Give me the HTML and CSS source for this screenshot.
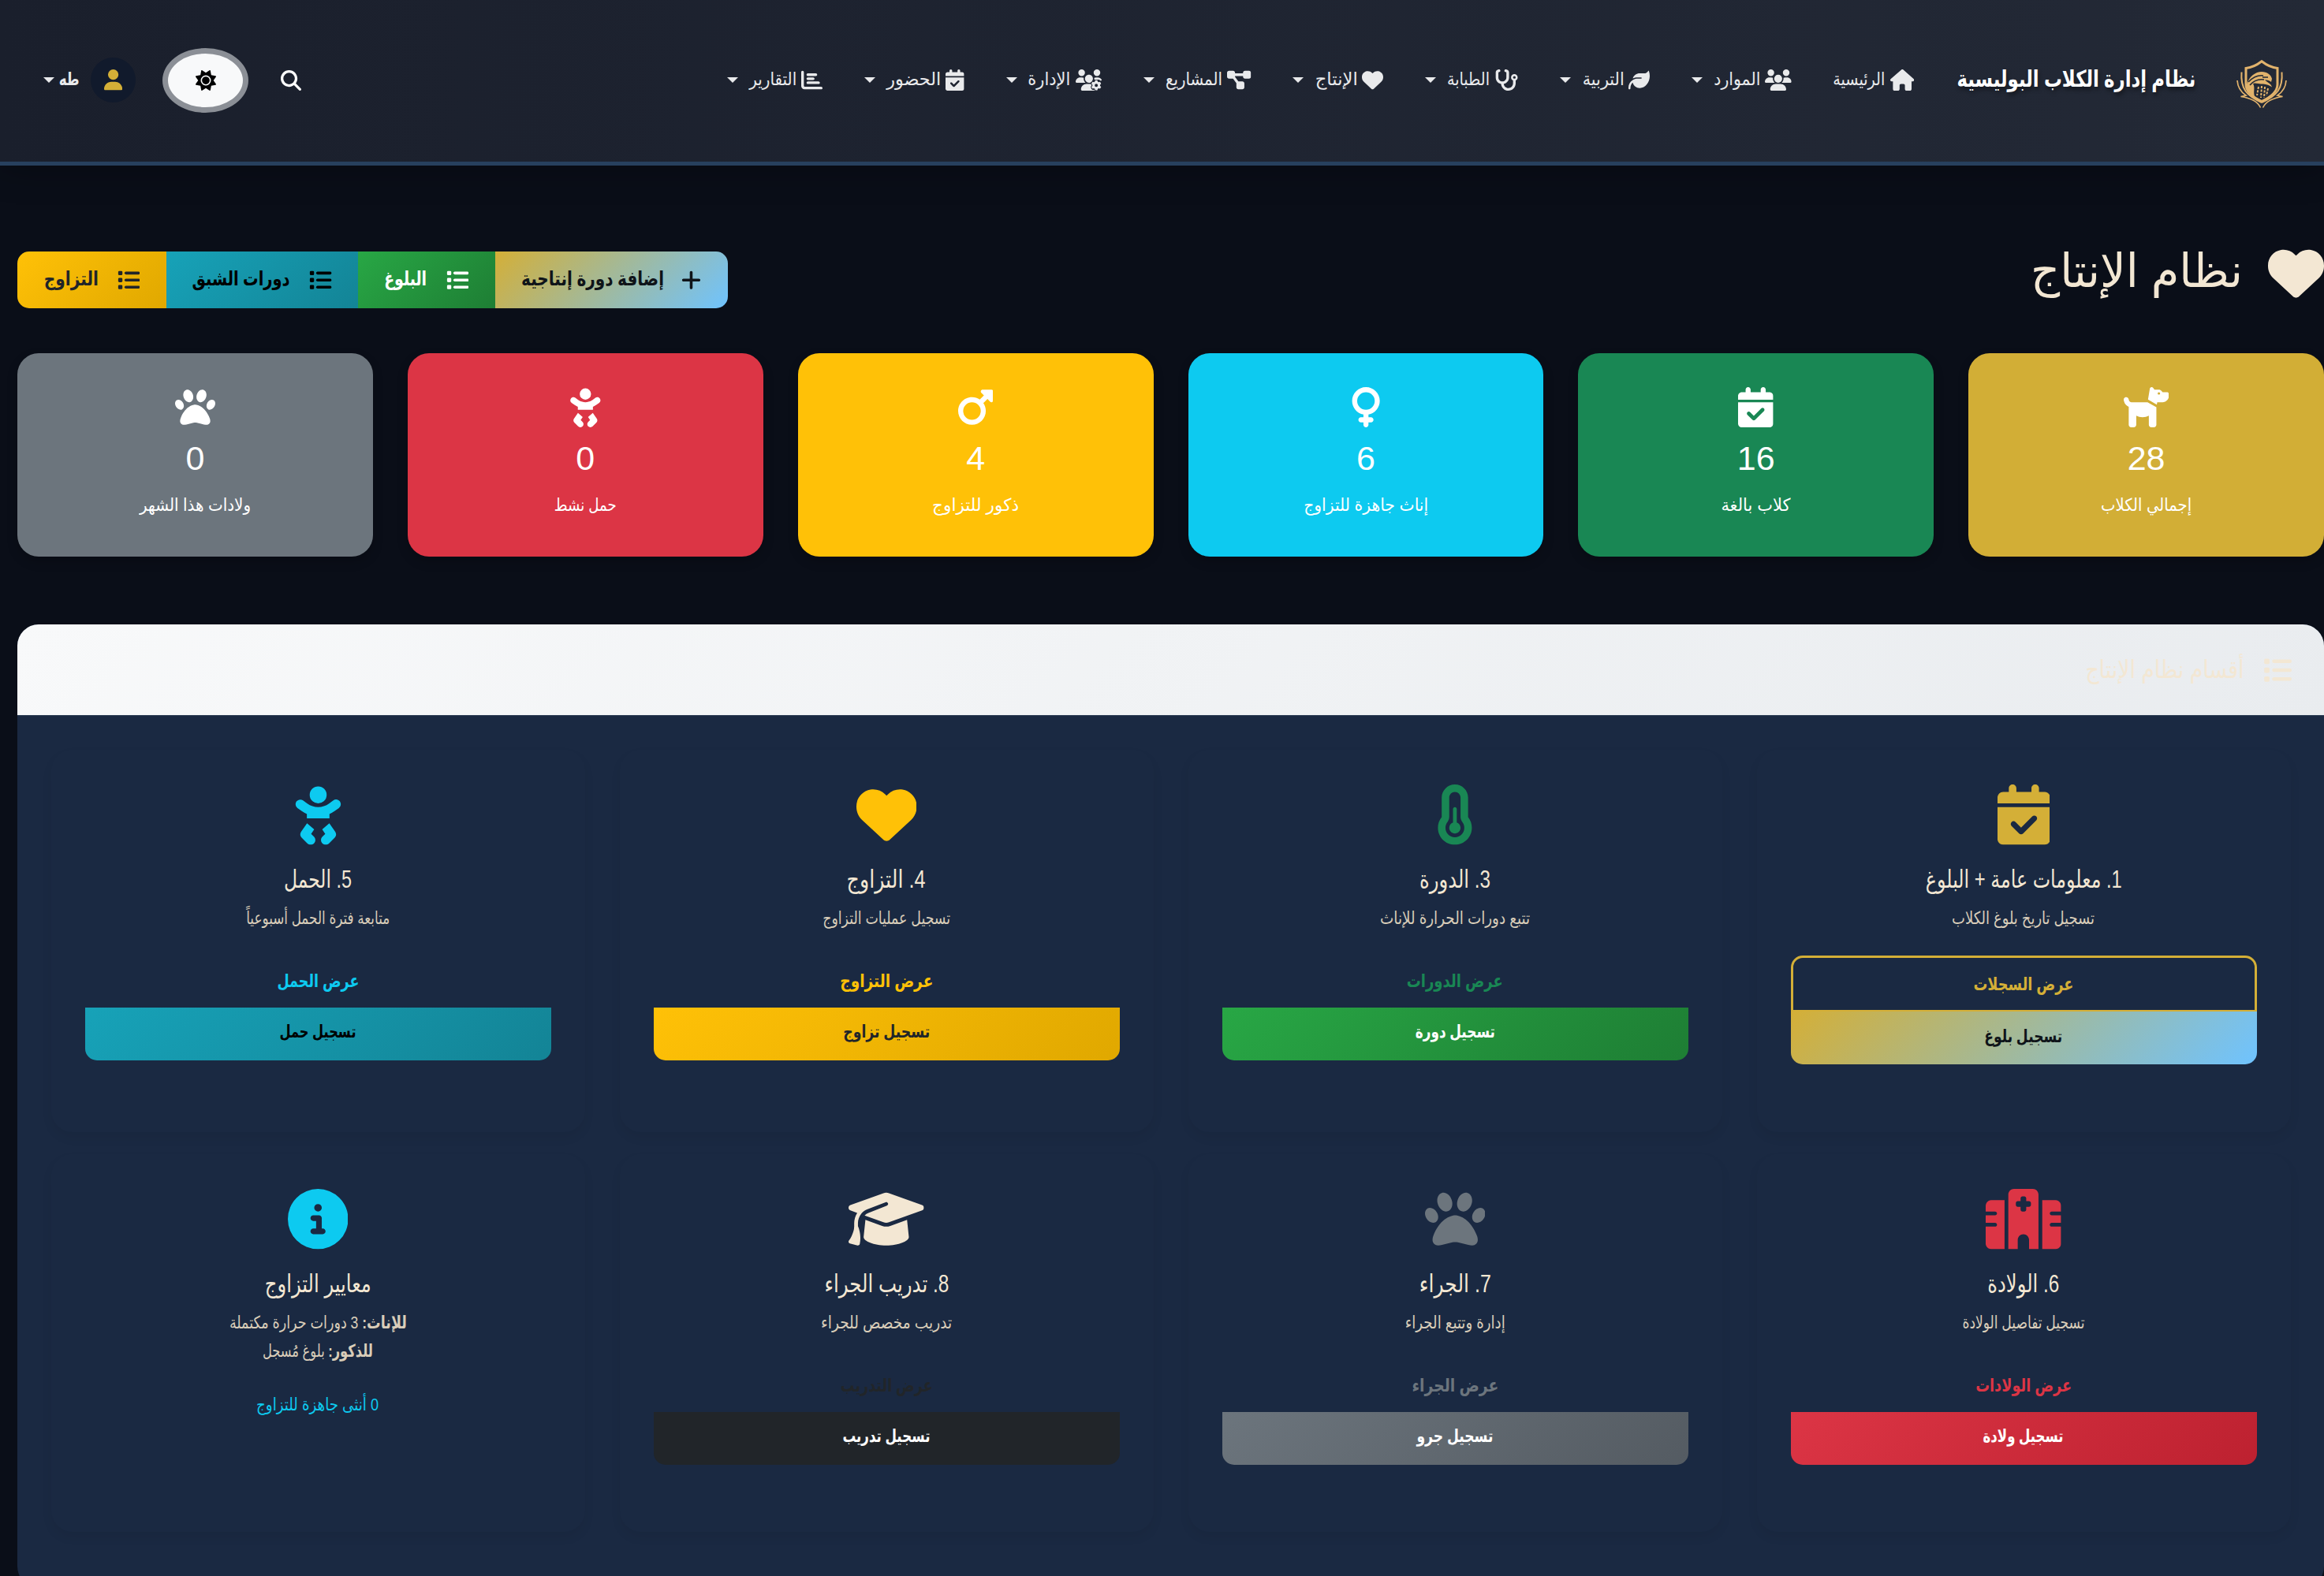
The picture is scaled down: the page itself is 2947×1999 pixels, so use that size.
FILE: index.html
```html
<!DOCTYPE html>
<html lang="ar" dir="rtl">
<head>
<meta charset="utf-8">
<title>نظام إدارة الكلاب البوليسية</title>
<link rel="stylesheet" href="styles.css">
</head>
<body>
<svg class="sprite" aria-hidden="true">
<symbol id="heart" viewBox="0 0 512 512"><path d="M47.6 300.4L228.3 469.1c7.5 7 17.4 10.9 27.7 10.9s20.2-3.9 27.7-10.9L464.4 300.4c30.4-28.3 47.6-68 47.6-109.5v-5.8c0-69.9-50.5-129.5-119.4-141C347 36.5 300.6 51.4 268 84L256 96 244 84c-32.6-32.6-79-47.5-124.6-39.9C50.5 55.6 0 115.2 0 185.1v5.8c0 41.5 17.2 81.2 47.6 109.5z"/></symbol>
<symbol id="house" viewBox="0 0 576 512"><path d="M575.8 255.5c0 18-15 32.1-32 32.1h-32l.7 160.2c0 2.7-.2 5.4-.5 8.1V472c0 22.1-17.9 40-40 40H456c-1.1 0-2.2 0-3.3-.1c-1.4 .1-2.8 .1-4.2 .1H416 392c-22.1 0-40-17.9-40-40V448 384c0-17.7-14.3-32-32-32H256c-17.7 0-32 14.3-32 32v64 24c0 22.1-17.9 40-40 40H160 128.1c-1.5 0-3-.1-4.5-.2c-1.2 .1-2.4 .2-3.6 .2H104c-22.1 0-40-17.9-40-40V360c0-.9 0-1.9 .1-2.8V287.6H32c-18 0-32-14-32-32.1c0-9 3-17 10-24L266.4 8c7-7 15-8 22-8s15 2 21 7L564.8 231.5c8 7 12 15 11 24z"/></symbol>
<symbol id="users" viewBox="0 0 640 512"><path d="M144 0a80 80 0 1 1 0 160A80 80 0 1 1 144 0zM512 0a80 80 0 1 1 0 160A80 80 0 1 1 512 0zM0 298.7C0 239.8 47.8 192 106.7 192h42.7c15.9 0 31 3.5 44.6 9.7c-1.3 7.2-1.9 14.7-1.9 22.3c0 38.2 16.8 72.5 43.3 96c-.2 0-.4 0-.7 0H21.3C9.6 320 0 310.4 0 298.7zM405.3 320c-.2 0-.4 0-.7 0c26.6-23.5 43.3-57.8 43.3-96c0-7.6-.7-15-1.9-22.3c13.6-6.3 28.7-9.7 44.6-9.7h42.7C592.2 192 640 239.8 640 298.7c0 11.8-9.6 21.3-21.3 21.3H405.3zM224 224a96 96 0 1 1 192 0 96 96 0 1 1 -192 0zM128 485.3C128 411.7 187.7 352 261.3 352H378.7C452.3 352 512 411.7 512 485.3c0 14.7-11.9 26.7-26.7 26.7H154.7c-14.7 0-26.7-11.9-26.7-26.7z"/></symbol>
<symbol id="leaf" viewBox="0 0 512 512"><path d="M272 96c-78.6 0-145.1 51.5-167.7 122.5c33.6-17 71.5-26.5 111.7-26.5h88c8.8 0 16 7.2 16 16s-7.2 16-16 16H288 216s0 0 0 0c-16.6 0-32.7 1.9-48.3 5.4c-25.9 5.9-49.9 16.4-71.4 30.7c0 0 0 0 0 0C38.3 298.8 0 364.9 0 440v16c0 13.3 10.7 24 24 24s24-10.7 24-24V440c0-48.7 20.7-92.5 53.8-123.2C121.6 392.3 190.3 448 272 448l1 0c132.1-.7 239-130.9 239-291.4c0-42.6-7.5-83.1-21.1-119.6c-2.6-6.9-12.7-6.6-16.2-.1C455.9 72.1 418.7 96 376 96L272 96z"/></symbol>
<symbol id="stethoscope" viewBox="0 0 576 512"><path d="M142.4 21.9c5.6 16.8-3.5 34.9-20.2 40.5L96 71.1V192c0 53 43 96 96 96s96-43 96-96V71.1l-26.1-8.7c-16.8-5.6-25.8-23.7-20.2-40.5s23.7-25.8 40.5-20.2l26.1 8.7C334.4 19.1 352 43.5 352 71.1V192c0 77.2-54.6 141.6-127.3 156.7C231 404.6 278.4 448 336 448c61.9 0 112-50.1 112-112V265.3c-28.3-12.3-48-40.5-48-73.3c0-44.2 35.8-80 80-80s80 35.8 80 80c0 32.8-19.7 61-48 73.3V336c0 97.2-78.8 176-176 176c-92.9 0-168.9-71.9-175.5-163.1C87.2 334.2 32 269.6 32 192V71.1c0-27.5 17.6-52 43.8-60.7l26.1-8.7c16.8-5.6 34.9 3.5 40.5 20.2zM480 224a32 32 0 1 0 0-64 32 32 0 1 0 0 64z"/></symbol>
<symbol id="diagram" viewBox="0 0 576 512"><path d="M0 80C0 53.5 21.5 32 48 32h96c26.5 0 48 21.5 48 48V96H384V80c0-26.5 21.5-48 48-48h96c26.5 0 48 21.5 48 48v96c0 26.5-21.5 48-48 48H432c-26.5 0-48-21.5-48-48V160H192v16c0 1.7-.1 3.4-.3 5L272 288h96c26.5 0 48 21.5 48 48v96c0 26.5-21.5 48-48 48H272c-26.5 0-48-21.5-48-48V336c0-1.7 .1-3.4 .3-5L144 224H48c-26.5 0-48-21.5-48-48V80z"/></symbol>
<symbol id="users-gear" viewBox="0 0 640 512"><path d="M144 160A80 80 0 1 0 144 0a80 80 0 1 0 0 160zm368 0A80 80 0 1 0 512 0a80 80 0 1 0 0 160zM0 298.7C0 310.4 9.6 320 21.3 320H234.7c.2 0 .4 0 .7 0c-26.6-23.5-43.3-57.8-43.3-96c0-7.6 .7-15 1.9-22.3c-13.6-6.3-28.7-9.7-44.6-9.7H106.7C47.8 192 0 239.8 0 298.7zM320 320c24 0 45.9-8.8 62.7-23.3C400 275 416 250 416 224c0-53-43-96-96-96s-96 43-96 96s43 96 96 96zm65.4 60.2c-10.3-5.9-18.1-16.2-20.8-28.2H261.3C187.7 352 128 411.7 128 485.3c0 14.7 11.9 26.7 26.7 26.7H455.2c-2.1-5.2-3.2-10.9-3.2-16.4v-3l-4-2.3c-18 11-42 10-57.300-8.200-14-18-30-42-24-72l18.700-29.900zM446 202c13.600-6.300 28.700-10 44.600-10h42.700c45 0 84 28 99 67l-26 16-20-11c-10-12-22-16-36-18h-100c-3-14-3-30-4.300-44z"/><path fill-rule="evenodd" d="M470 262h52l8 34 24 14 33-10 26 45-25 24v28l25 24-26 45-33-10-24 14-8 34h-52l-8-34-24-14-33 10-26-45 25-24v-28l-25-24 26-45 33 10 24-14zM496 345a38 38 0 1 0 0 76 38 38 0 1 0 0-76z"/></symbol>
<symbol id="calendar" viewBox="0 0 448 512"><path d="M128 0c17.7 0 32 14.3 32 32V64H288V32c0-17.7 14.3-32 32-32s32 14.3 32 32V64h48c26.5 0 48 21.5 48 48v48H0V112C0 85.5 21.5 64 48 64H96V32c0-17.7 14.3-32 32-32zM0 192H448V464c0 26.5-21.5 48-48 48H48c-26.5 0-48-21.5-48-48V192zM329 305c9.4-9.4 9.4-24.6 0-33.9s-24.6-9.4-33.9 0l-95 95-47-47c-9.4-9.4-24.6-9.4-33.9 0s-9.400 24.600 0 33.900l64 64c9.400 9.400 24.600 9.400 33.900 0L329 305z"/></symbol>
<symbol id="chart" viewBox="0 0 512 512"><path d="M32 32c17.700 0 32 14.300 32 32V400c0 8.800 7.200 16 16 16H480c17.700 0 32 14.300 32 32s-14.300 32-32 32H80c-44.200 0-80-35.800-80-80V64C0 46.300 14.300 32 32 32zm96 96c0-17.700 14.300-32 32-32l192 0c17.700 0 32 14.300 32 32s-14.300 32-32 32l-192 0c-17.700 0-32-14.300-32-32zm32 64H288c17.700 0 32 14.300 32 32s-14.300 32-32 32H160c-17.700 0-32-14.300-32-32s14.300-32 32-32zm0 96H416c17.700 0 32 14.300 32 32s-14.300 32-32 32H160c-17.700 0-32-14.300-32-32s14.300-32 32-32z"/></symbol>
<symbol id="search" viewBox="0 0 512 512"><path d="M416 208c0 45.900-14.900 88.300-40 122.700L502.600 457.400c12.500 12.500 12.500 32.800 0 45.300s-32.800 12.500-45.300 0L330.700 376c-34.400 25.200-76.800 40-122.700 40C93.100 416 0 322.900 0 208S93.100 0 208 0S416 93.100 416 208zM208 352a144 144 0 1 0 0-288 144 144 0 1 0 0 288z"/></symbol>
<symbol id="sun" viewBox="0 0 512 512"><path d="M361.500 1.200c5 2.100 8.600 6.600 9.600 11.900L391 121l107.900 19.800c5.300 1 9.800 4.600 11.900 9.600s1.500 10.700-1.600 15.200L446.900 256l62.300 90.300c3.100 4.500 3.700 10.200 1.600 15.200s-6.600 8.600-11.900 9.600L391 391 371.100 498.900c-1 5.300-4.600 9.800-9.600 11.900s-10.700 1.500-15.200-1.600L256 446.900l-90.300 62.300c-4.500 3.100-10.200 3.700-15.200 1.600s-8.600-6.600-9.600-11.900L121 391 13.100 371.100c-5.300-1-9.800-4.600-11.900-9.600s-1.500-10.700 1.600-15.200L65.100 256 2.800 165.700c-3.100-4.500-3.700-10.200-1.600-15.200s6.600-8.600 11.900-9.600L121 121 140.900 13.100c1-5.300 4.600-9.800 9.600-11.900s10.700-1.500 15.200 1.600L256 65.100 346.300 2.800c4.500-3.100 10.200-3.700 15.200-1.600zM160 256a96 96 0 1 1 192 0 96 96 0 1 1 -192 0zm224 0a128 128 0 1 0 -256 0 128 128 0 1 0 256 0z"/></symbol>
<symbol id="user" viewBox="0 0 448 512"><path d="M224 256A128 128 0 1 0 224 0a128 128 0 1 0 0 256zm-45.700 48C79.800 304 0 383.800 0 482.300C0 498.700 13.300 512 29.700 512H418.300c16.400 0 29.700-13.300 29.700-29.700C448 383.800 368.200 304 269.700 304H178.300z"/></symbol>
<symbol id="plus" viewBox="0 0 448 512"><path d="M256 80c0-17.700-14.300-32-32-32s-32 14.300-32 32V224H48c-17.700 0-32 14.300-32 32s14.300 32 32 32H192V432c0 17.700 14.300 32 32 32s32-14.300 32-32V288H400c17.700 0 32-14.300 32-32s-14.300-32-32-32H256V80z"/></symbol>
<symbol id="list" viewBox="0 0 512 512"><rect x="16" y="48" width="96" height="96" rx="24"/><rect x="16" y="208" width="96" height="96" rx="24"/><rect x="16" y="368" width="96" height="96" rx="24"/><rect x="160" y="64" width="352" height="64" rx="32"/><rect x="160" y="224" width="352" height="64" rx="32"/><rect x="160" y="384" width="352" height="64" rx="32"/></symbol>
<symbol id="dog" viewBox="0 0 576 512"><path d="M309.600 158.500L332.700 19.800C334.600 8.400 344.500 0 356.100 0c7.500 0 14.500 3.500 19 9.500L392 32h52.100c12.700 0 24.900 5.100 33.900 14.100L496 64h56c13.300 0 24 10.700 24 24v24c0 44.200-35.800 80-80 80H464 448 426.700l-5.100 30.500-112-64zM416 256.100L416 480c0 17.700-14.300 32-32 32H352c-17.700 0-32-14.300-32-32V364.800c-24 12.300-51.200 19.200-80 19.200s-56-6.900-80-19.200V480c0 17.700-14.300 32-32 32H96c-17.700 0-32-14.300-32-32V249.800c-28.800-10.900-51.400-35.300-59.200-66.500L1 167.800c-4.300-17.100 6.100-34.500 23.300-38.800s34.500 6.100 38.800 23.300l3.900 15.500C70.500 182 83.300 192 98 192h30 16H303.800L416 256.100zM464 80a16 16 0 1 0 -32 0 16 16 0 1 0 32 0z"/></symbol>
<symbol id="venus" viewBox="0 0 384 512"><path d="M80 176a112 112 0 1 1 224 0A112 112 0 1 1 80 176zM224 349.100c81.900-15 144-86.800 144-173.100C368 78.800 289.200 0 192 0S16 78.800 16 176c0 86.300 62.100 158.100 144 173.100V384H128c-17.700 0-32 14.300-32 32s14.300 32 32 32h32v32c0 17.700 14.300 32 32 32s32-14.300 32-32V448h32c17.700 0 32-14.300 32-32s-14.300-32-32-32H224V349.100z"/></symbol>
<symbol id="mars" viewBox="0 0 448 512"><path d="M289.800 46.800c3.700-9 12.500-14.800 22.200-14.800H424c13.300 0 24 10.700 24 24V168c0 9.700-5.800 18.500-14.800 22.200s-19.300 1.700-26.200-5.200l-33.400-33.400L321 204.200c19.500 28.400 31 62.700 31 99.800c0 97.200-78.800 176-176 176S0 401.200 0 304s78.800-176 176-176c37 0 71.400 11.400 99.800 31l52.600-52.600L295 73c-6.900-6.900-8.900-17.200-5.200-26.200zM176 416a112 112 0 1 0 0-224 112 112 0 1 0 0 224z"/></symbol>
<symbol id="baby" viewBox="0 0 448 512"><path d="M152 88a72 72 0 1 1 144 0A72 72 0 1 1 152 88zM39.700 144.500c13-17.900 38-21.800 55.900-8.800L131.800 162c26.800 19.500 59.100 30 92.200 30s65.400-10.500 92.200-30l36.200-26.400c17.900-13 42.900-9 55.900 8.800s9 42.900-8.800 55.900l-36.200 26.400c-13.600 9.900-28.100 18.200-43.300 25V288H128V251.700c-15.200-6.700-29.700-15.100-43.300-25L48.500 200.300c-17.900-13-21.800-38-8.800-55.900zm89.800 184.800l60.600 53-26 37.200 24.300 24.300c15.600 15.600 15.600 40.900 0 56.600s-40.900 15.600-56.600 0l-48-48C70 438.600 68.100 417 79.200 401.100l50.200-71.800zm128.500 53l60.600-53 50.200 71.800c11.100 15.900 9.200 37.500-4.500 51.200l-48 48c-15.600 15.600-40.900 15.600-56.600 0s-15.600-40.900 0-56.600L284 419.400l-26-37.200z"/></symbol>
<symbol id="paw" viewBox="0 0 512 512"><path d="M226.500 92.900c14.300 42.900-.3 86.200-32.600 96.800s-70.100-15.600-84.400-58.500s.3-86.200 32.600-96.800s70.100 15.600 84.400 58.500zM100.400 198.600c18.900 32.400 14.300 70.100-10.200 84.100s-59.700-.9-78.500-33.300S-2.700 179.300 21.800 165.300s59.700 .9 78.500 33.300zM69.200 401.200C121.600 259.900 214.700 224 256 224s134.400 35.900 186.800 177.200c3.600 9.700 5.200 20.100 5.200 30.500v1.600c0 25.800-20.900 46.700-46.700 46.700c-11.500 0-22.900-1.400-34-4.200l-88-22c-15.300-3.800-31.300-3.800-46.600 0l-88 22c-11.100 2.800-22.500 4.200-34 4.200C84.900 480 64 459.100 64 433.300v-1.600c0-10.400 1.600-20.800 5.200-30.500zM421.800 282.700c-24.500-14-29.100-51.700-10.200-84.100s54-47.300 78.500-33.300s29.100 51.700 10.200 84.100s-54 47.300-78.500 33.300zM310.100 189.700c-32.300-10.600-46.900-53.900-32.600-96.800s52.100-69.100 84.400-58.500s46.900 53.900 32.600 96.800s-52.100 69.100-84.400 58.500z"/></symbol>
<symbol id="temp" viewBox="0 0 320 512"><path d="M160 64c-26.500 0-48 21.500-48 48V276.500c0 17.300-7.100 31.900-15.300 42.500C86.200 332.600 80 349.500 80 368c0 44.200 35.800 80 80 80s80-35.800 80-80c0-18.500-6.200-35.400-16.700-48.900c-8.200-10.600-15.300-25.200-15.300-42.500V112c0-26.500-21.500-48-48-48zM48 112C48 50.200 98.100 0 160 0s112 50.100 112 112V276.500c0 .1 .1 .3 .2 .6c.2 .6 .8 1.600 1.700 2.800c18.900 24.400 30.100 55 30.100 88.100c0 79.500-64.500 144-144 144S16 447.500 16 368c0-33.200 11.200-63.800 30.100-88.100c.9-1.200 1.500-2.200 1.700-2.800c.1-.3 .2-.5 .2-.6V112zM208 368c0 26.500-21.500 48-48 48s-48-21.500-48-48c0-20.900 13.400-38.700 32-45.300V208c0-8.800 7.200-16 16-16s16 7.200 16 16V322.700c18.600 6.600 32 24.400 32 45.300z"/></symbol>
<symbol id="hospital" viewBox="0 0 640 512"><path d="M192 48c0-26.500 21.500-48 48-48H400c26.500 0 48 21.500 48 48V512H368V432c0-26.500-21.500-48-48-48s-48 21.500-48 48v80H192V48zM48 96H160V512H48c-26.500 0-48-21.500-48-48V320H80c8.800 0 16-7.200 16-16s-7.200-16-16-16H0V224H80c8.800 0 16-7.200 16-16s-7.200-16-16-16H0V144c0-26.500 21.500-48 48-48zm544 0c26.500 0 48 21.500 48 48v48H560c-8.800 0-16 7.200-16 16s7.200 16 16 16h80v64H560c-8.800 0-16 7.200-16 16s7.200 16 16 16h80V464c0 26.500-21.500 48-48 48H480V96H592zM312 64c-8.800 0-16 7.200-16 16v24H272c-8.800 0-16 7.200-16 16v16c0 8.800 7.200 16 16 16h24v24c0 8.800 7.200 16 16 16h16c8.800 0 16-7.200 16-16V152h24c8.800 0 16-7.200 16-16V120c0-8.800-7.200-16-16-16H344V80c0-8.800-7.200-16-16-16H312z"/></symbol>
<symbol id="cap" viewBox="0 0 640 512"><path d="M320 32c-8.100 0-16.100 1.400-23.700 4.100L15.800 137.400C6.300 140.900 0 149.900 0 160s6.300 19.100 15.800 22.600l57.900 20.900C57.300 229.300 48 259.800 48 291.900v28.100c0 28.400-10.800 57.700-22.300 80.800c-6.500 13-13.900 25.800-22.500 37.600C0 442.700-.9 448.300 .9 453.400s6 8.900 11.200 10.200l64 16c4.200 1.100 8.700 .3 12.400-2s6.300-6.100 7.100-10.400c8.600-42.800 4.300-81.200-2.100-108.700C90.300 344.300 86 329.800 80 316.500V291.900c0-30.200 10.200-58.700 27.900-81.500c12.900-15.500 29.600-28 49.200-35.700l157-61.700c8.200-3.200 17.500 .8 20.700 9s-.8 17.500-9 20.700l-157 61.700c-12.400 4.900-23.300 12.400-32.200 21.600l159.600 57.600c7.600 2.700 15.600 4.100 23.700 4.100s16.100-1.400 23.700-4.100L624.200 182.600c9.500-3.400 15.800-12.500 15.800-22.600s-6.300-19.100-15.800-22.600L343.700 36.100C336.100 33.400 328.100 32 320 32zM128 408c0 35.300 86 72 192 72s192-36.700 192-72L496.700 262.600 354.500 314c-11.100 4-22.800 6-34.500 6s-23.500-2-34.500-6L143.300 262.600 128 408z"/></symbol>
<symbol id="info" viewBox="0 0 512 512"><path d="M256 512A256 256 0 1 0 256 0a256 256 0 1 0 0 512zM216 336h24V272H216c-13.300 0-24-10.700-24-24s10.700-24 24-24h48c13.300 0 24 10.700 24 24v88h8c13.300 0 24 10.700 24 24s-10.700 24-24 24H216c-13.300 0-24-10.700-24-24s10.700-24 24-24zm40-208a32 32 0 1 1 0 64 32 32 0 1 1 0-64z"/></symbol>
</svg>

<header class="navbar">
  <svg class="logo" viewBox="0 0 64 61"><g fill="none" stroke="#e2b36c">
    <path stroke-width="3" d="M32 1.800C26 6.500 19 9.800 12 10.500V31c0 9 8 16 20 21.500C44 47 52 40 52 31V10.500C45 9.800 38 6.500 32 1.800z"/>
    <path stroke-width="2" d="M6.500 15.500c-.8 10 .2 17 5 24 4.500 6.200 12 11 20.500 14.500M57.500 15.500c.8 10-.2 17-5 24C48 45.700 40.500 50.500 32 54"/>
    <path stroke-width="1.700" d="M1 26c.5 8 3.500 14 11 19l-6.500 1.500C16 48 26 51 30.500 60.500M63 26c-.5 8-3.500 14-11 19l6.500 1.500C48 48 38 51 33.500 60.500"/>
  </g><path fill="#e2b36c" d="M13 31c3-10 11-16 19-16 7 0 12 4 13 9l-1 4c-2-2-5-2.500-8-2.500 3 3 8 4.500 9 9-3-2.500-7-3.500-11-4-6 0-11-2-13-.5 3 5 0 11 2 16C16 42 13 37 13 31z"/>
  <path fill="none" stroke="#222835" stroke-width="1.600" d="M15 28c6-6 12-9 19-8M17 32c5-6 11-8 18-7M33 22h7"/>
  <path fill="none" stroke="#e2b36c" stroke-width="2" stroke-dasharray="3 1.500" d="M28 34l-2 11M32 33l-1 15M36 34l-1 14M40 36l-2 9"/></svg>
  <div class="brand"><b data-w="303">نظام إدارة الكلاب البوليسية</b></div>
  <nav class="menu">
    <a><svg viewBox="0 0 576 512"><use href="#house"/></svg><b data-w="66">الرئيسية</b></a>
    <a><svg viewBox="0 0 640 512"><use href="#users"/></svg><b data-w="59">الموارد</b><i></i></a>
    <a><svg viewBox="0 0 512 512"><use href="#leaf"/></svg><b data-w="53">التربية</b><i></i></a>
    <a><svg viewBox="0 0 576 512"><use href="#stethoscope"/></svg><b data-w="54">الطبابة</b><i></i></a>
    <a><svg viewBox="0 0 512 512"><use href="#heart"/></svg><b data-w="54">الإنتاج</b><i></i></a>
    <a><svg viewBox="0 0 576 512"><use href="#diagram"/></svg><b data-w="72">المشاريع</b><i></i></a>
    <a><svg viewBox="0 0 640 512"><use href="#users-gear"/></svg><b data-w="54">الإدارة</b><i></i></a>
    <a><svg viewBox="0 0 448 512"><use href="#calendar"/></svg><b data-w="69">الحضور</b><i></i></a>
    <a><svg viewBox="0 0 512 512"><use href="#chart"/></svg><b data-w="60">التقارير</b><i></i></a>
  </nav>
  <div class="tools">
    <svg class="find" viewBox="0 0 512 512"><use href="#search"/></svg>
    <button class="theme"><svg viewBox="0 0 512 512"><use href="#sun"/></svg></button>
    <span class="avatar"><svg viewBox="0 0 448 512"><use href="#user"/></svg></span>
    <span class="me"><b data-w="26">طه</b><i></i></span>
  </div>
</header>

<main>
  <div class="title-row">
    <h1><svg viewBox="0 0 512 512"><use href="#heart"/></svg><b data-w="269">نظام الإنتاج</b></h1>
    <div class="actions">
      <a class="add g-primary"><svg viewBox="0 0 448 512"><use href="#plus"/></svg><b data-w="181">إضافة دورة إنتاجية</b></a>
      <a class="g-success"><svg viewBox="0 0 512 512"><use href="#list"/></svg><b data-w="54">البلوغ</b></a>
      <a class="g-info"><svg viewBox="0 0 512 512"><use href="#list"/></svg><b data-w="124">دورات الشبق</b></a>
      <a class="g-warning"><svg viewBox="0 0 512 512"><use href="#list"/></svg><b data-w="69">التزاوج</b></a>
    </div>
  </div>

  <div class="stats">
    <div class="stat s-gold"><svg viewBox="0 0 576 512"><use href="#dog"/></svg><strong>28</strong><b data-w="115">إجمالي الكلاب</b></div>
    <div class="stat s-green"><svg viewBox="0 0 448 512"><use href="#calendar"/></svg><strong>16</strong><b data-w="88">كلاب بالغة</b></div>
    <div class="stat s-cyan"><svg viewBox="0 0 384 512"><use href="#venus"/></svg><strong>6</strong><b data-w="158">إناث جاهزة للتزاوج</b></div>
    <div class="stat s-yellow"><svg viewBox="0 0 448 512"><use href="#mars"/></svg><strong>4</strong><b data-w="110">ذكور للتزاوج</b></div>
    <div class="stat s-red"><svg viewBox="0 0 448 512"><use href="#baby"/></svg><strong>0</strong><b data-w="79">حمل نشط</b></div>
    <div class="stat s-gray"><svg viewBox="0 0 512 512"><use href="#paw"/></svg><strong>0</strong><b data-w="141">ولادات هذا الشهر</b></div>
  </div>

  <section class="panel">
    <h2><svg viewBox="0 0 512 512"><use href="#list"/></svg><b data-w="201">أقسام نظام الإنتاج</b></h2>
    <div class="grid">
      <article class="c-gold"><svg viewBox="0 0 448 512"><use href="#calendar"/></svg><h3><b data-w="249">1. معلومات عامة + البلوغ</b></h3><p><b data-w="181">تسجيل تاريخ بلوغ الكلاب</b></p>
        <a class="view outlined"><b data-w="127">عرض السجلات</b></a><a class="new g-primary"><b data-w="99">تسجيل بلوغ</b></a></article>
      <article class="c-green"><svg viewBox="0 0 320 512"><use href="#temp"/></svg><h3><b data-w="90">3. الدورة</b></h3><p><b data-w="190">تتبع دورات الحرارة للإناث</b></p>
        <a class="view"><b data-w="122">عرض الدورات</b></a><a class="new g-success"><b data-w="101">تسجيل دورة</b></a></article>
      <article class="c-yellow"><svg viewBox="0 0 512 512"><use href="#heart"/></svg><h3><b data-w="100">4. التزاوج</b></h3><p><b data-w="162">تسجيل عمليات التزاوج</b></p>
        <a class="view"><b data-w="118">عرض التزاوج</b></a><a class="new g-warning"><b data-w="110">تسجيل تزاوج</b></a></article>
      <article class="c-cyan"><svg viewBox="0 0 448 512"><use href="#baby"/></svg><h3><b data-w="86">5. الحمل</b></h3><p><b data-w="182">متابعة فترة الحمل أسبوعياً</b></p>
        <a class="view"><b data-w="104">عرض الحمل</b></a><a class="new g-info"><b data-w="97">تسجيل حمل</b></a></article>
      <article class="c-red"><svg viewBox="0 0 640 512"><use href="#hospital"/></svg><h3><b data-w="91">6. الولادة</b></h3><p><b data-w="155">تسجيل تفاصيل الولادة</b></p>
        <a class="view"><b data-w="122">عرض الولادات</b></a><a class="new g-danger"><b data-w="102">تسجيل ولادة</b></a></article>
      <article class="c-gray"><svg viewBox="0 0 512 512"><use href="#paw"/></svg><h3><b data-w="91">7. الجراء</b></h3><p><b data-w="127">إدارة وتتبع الجراء</b></p>
        <a class="view"><b data-w="110">عرض الجراء</b></a><a class="new g-gray"><b data-w="97">تسجيل جرو</b></a></article>
      <article class="c-cream"><svg viewBox="0 0 640 512"><use href="#cap"/></svg><h3><b data-w="158">8. تدريب الجراء</b></h3><p><b data-w="166">تدريب مخصص للجراء</b></p>
        <a class="view faint"><b data-w="117">عرض التدريب</b></a><a class="new g-dark"><b data-w="111">تسجيل تدريب</b></a></article>
      <article class="c-cyan"><svg viewBox="0 0 512 512"><use href="#info"/></svg><h3><b data-w="135">معايير التزاوج</b></h3><p><b data-w="225"><em>للإناث:</em> 3 دورات حرارة مكتملة</b></p><p><b data-w="140"><em>للذكور:</em> بلوغ مُسجل</b></p>
        <div class="ready"><b data-w="155">0 أنثى جاهزة للتزاوج</b></div></article>
    </div>
  </section>
</main>
<script src="fit.js"></script>
</body>
</html>
```
FILE: styles.css
```css
* { box-sizing: border-box; }
body {
  margin: 0;
  width: 2947px;
  height: 1999px;
  overflow: hidden;
  background: #0a0e18;
  font-family: "Liberation Sans", "DejaVu Sans", sans-serif;
  color: #f3e7d3;
}
.sprite { position: absolute; width: 0; height: 0; }
svg { display: block; fill: currentColor; height: 1em; width: auto; flex: none; }
h1, h2, h3, p { margin: 0; font-weight: 400; }
b { display: block; font-weight: inherit; white-space: nowrap; flex: none; }
b > span { display: inline-block; transform-origin: 100% 50%; }
em { font-style: normal; font-weight: 700; }
i { width: 0; height: 0; border: 7px solid transparent; border-bottom-width: 0; border-top-color: currentColor; flex: none; }

.navbar {
  height: 210px;
  display: flex;
  align-items: center;
  padding: 0 47px 2px 55px;
  border-bottom: 5px solid #27405e;
  background: linear-gradient(90deg, #1a1f2c, #232936);
  box-shadow: 0 4px 40px rgba(0, 0, 0, .3);
  color: #e9eaec;
}
.logo { width: 64px; height: 61px; margin-top: 10px; }
.brand { margin-right: 52px; padding-bottom: 3px; font-size: 29px; font-weight: 700; color: #fff; text-shadow: 2px 4px 6px rgba(0, 0, 0, .4); }
.menu { display: flex; gap: 52.800px; margin-right: 54px; font-size: 23px; }
.menu a { display: flex; align-items: center; }
.menu b { padding-bottom: 2px; }
.menu svg { font-size: 27px; margin-left: 6px; }
.menu i { margin-right: 14px; }
.tools { display: flex; align-items: center; margin-right: auto; }
.find { font-size: 26px; color: #fff; margin-left: 41px; }
.theme {
  width: 109px; height: 82px; padding: 0; margin-left: 34px;
  border: 7px solid #8b8f96; border-radius: 50%;
  background: #f8f9fa; color: #000;
  display: flex; align-items: center; justify-content: center;
}
.theme svg { font-size: 26px; }
.avatar { width: 57px; height: 57px; border-radius: 50%; background: #111a2c; color: #d4af37; display: flex; align-items: center; justify-content: center; margin-left: 14px; }
.avatar svg { font-size: 26.500px; }
.me { display: flex; align-items: center; gap: 6px; font-size: 23px; font-weight: 700; }
.me b { padding-bottom: 3px; }

main { padding: 109px 0 0 22px; }
.title-row { display: flex; justify-content: space-between; height: 72px; }
h1 { display: flex; align-items: center; font-size: 59px; gap: 32px; height: 54px; }
h1 b { padding-bottom: 5px; }
h1 svg { font-size: 71px; }
.actions { display: flex; border-radius: 15px; overflow: hidden; font-size: 25px; font-weight: 700; }
.actions a { display: flex; align-items: center; padding: 0 33.500px; gap: 24px; }
.actions b { padding-bottom: 3px; }
.actions svg { font-size: 28.500px; }
.actions .add { padding-right: 34px; gap: 22px; }

.g-primary { background: linear-gradient(135deg, #d4af37, #6fc3ff); color: #0f1419; }
.g-success { background: linear-gradient(135deg, #28a745, #1e7e34); color: #fff; }
.g-info { background: linear-gradient(135deg, #17a2b8, #138496); color: #000; }
.g-warning { background: linear-gradient(135deg, #ffc107, #e0a800); color: #212529; }
.g-danger { background: linear-gradient(135deg, #dc3545, #bd2130); color: #fff; }
.g-gray { background: linear-gradient(135deg, #6c757d, #545b62); color: #fff; }
.g-dark { background: #212529; color: #fff; }

.stats { display: grid; grid-template-columns: repeat(6, 1fr); gap: 44px; margin-top: 57px; }
.stat { height: 258px; border-radius: 27px; padding-top: 43px; display: flex; flex-direction: column; align-items: center; color: #fff; font-size: 22px; box-shadow: 0 6px 14px rgba(0, 0, 0, .2); }
.stat svg { font-size: 51px; }
.stat strong { font-weight: 400; font-size: 43px; line-height: 50px; margin: 14px 0 20px; }
.stat b { line-height: 30px; }
.s-gold { background: #d2ae36; }
.s-green { background: #198754; }
.s-cyan { background: #0dcaf0; }
.s-yellow { background: #ffc107; }
.s-red { background: #dc3545; }
.s-gray { background: #6c757d; }

.panel { margin-top: 86px; height: 1222px; border-radius: 27px; background: #1a2942; overflow: hidden; }
h2 { display: flex; align-items: center; height: 116px; padding-right: 41px; gap: 25px; font-size: 31px; background: linear-gradient(135deg, #f8f9fa, #e9ecef); border-bottom: 1px solid #2a3b52; }
h2 svg { font-size: 36px; }
.grid { display: grid; grid-template-columns: repeat(4, 1fr); grid-template-rows: 485px 479px; gap: 28px 44px; padding: 43px 42.500px; }
article { display: flex; flex-direction: column; align-items: center; padding: 44px 43px; border-radius: 27px; box-shadow: 0 7px 14px rgba(0, 0, 0, .06); font-size: 22px; }
article svg { font-size: 76.500px; }
h3 { font-size: 31px; line-height: 36px; margin: 26.500px 0 13px; color: #f3e7d3; }
p { line-height: 36px; color: #d9cdb9; }
.view, .new { align-self: stretch; display: flex; align-items: center; justify-content: center; height: 67px; font-weight: 700; }
.view { margin-top: 29px; height: 65.500px; font-size: 23px; }
.outlined { height: 71px; border: 3px solid #d4af37; border-bottom-width: 2px; border-radius: 15px 15px 0 0; }
.new { border-radius: 0 0 15px 15px; padding-bottom: 4px; }
.ready { color: #0dcaf0; margin-top: 32px; line-height: 36px; }
.faint { color: #212529; }
.c-gold { color: #d4af37; }
.c-green { color: #198754; }
.c-yellow { color: #ffc107; }
.c-cyan { color: #0dcaf0; }
.c-red { color: #dc3545; }
.c-gray { color: #6c757d; }
.c-cream { color: #f3e7d3; }
```
FILE: fit.js
```js
// Condense each label to the width reserved for it in the layout.
document.querySelectorAll('b[data-w]').forEach(function (label) {
  var inner = document.createElement('span');
  while (label.firstChild) inner.appendChild(label.firstChild);
  label.appendChild(inner);
  var width = Number(label.dataset.w);
  var natural = inner.getBoundingClientRect().width;
  label.style.width = width + 'px';
  inner.style.transform = 'scaleX(' + width / natural + ')';
});
```
